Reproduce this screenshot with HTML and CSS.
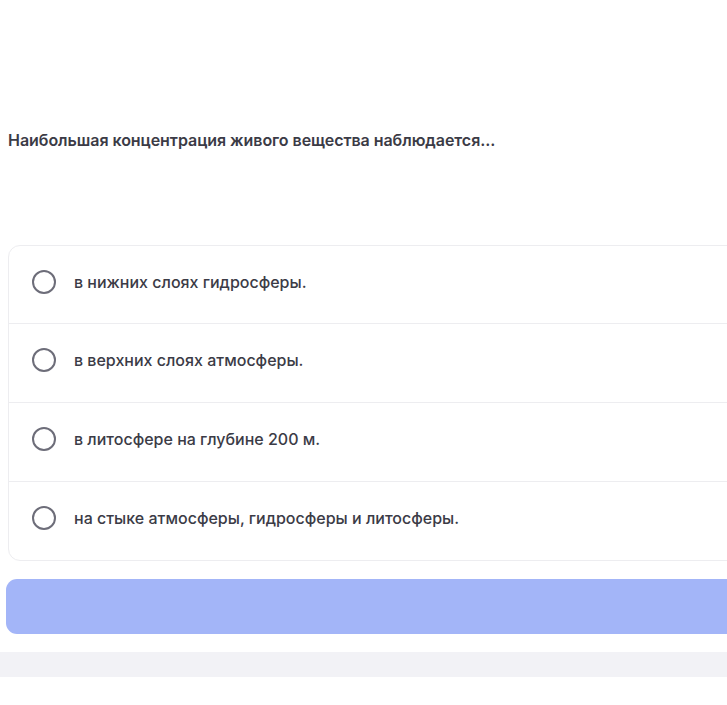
FILE: index.html
```html
<!DOCTYPE html>
<html lang="ru">
<head>
<meta charset="utf-8">
<link rel="stylesheet" href="styles.css">
</head>
<body>
<div class="page">
  <div class="question">Наибольшая концентрация живого вещества наблюдается...</div>
  <div class="options">
    <div class="option"><span class="radio"></span><span class="label">в нижних слоях гидросферы.</span></div>
    <div class="option"><span class="radio"></span><span class="label">в верхних слоях атмосферы.</span></div>
    <div class="option"><span class="radio"></span><span class="label">в литосфере на глубине 200 м.</span></div>
    <div class="option"><span class="radio"></span><span class="label">на стыке атмосферы, гидросферы и литосферы.</span></div>
  </div>
  <div class="submit"></div>
</div>
<div class="band"></div>
</body>
</html>
```
FILE: styles.css
```css
html, body {
  margin: 0;
  padding: 0;
  background: #ffffff;
  overflow: hidden;
  font-family: Inter, "Noto Sans", sans-serif;
}
.page {
  width: 780px;
  padding: 131px 0 0 8px;
}
.question {
  font-size: 16px;
  font-weight: 600;
  color: #3b3b46;
  line-height: 18px;
  letter-spacing: -0.05px;
}
.options {
  margin-top: 96px;
  border: 1px solid #ededf0;
  border-radius: 12px;
  background: #fff;
}
.option {
  display: flex;
  align-items: center;
  height: 77px;
  box-sizing: border-box;
  padding: 0 0 6px 23px;
  border-top: 1px solid #ededf0;
}
.option + .option {
  height: 79px;
}
.option:first-child {
  border-top: none;
}
.radio {
  width: 20px;
  height: 20px;
  border: 2.5px solid #6d6d79;
  border-radius: 50%;
  flex: none;
}
.label {
  margin-left: 18px;
  font-size: 16px;
  font-weight: 500;
  color: #3b3b46;
}
.submit {
  margin: 18px 0 0 -2px;
  height: 55px;
  border-radius: 11px;
  background: #a3b5f8;
}
.band {
  margin-top: 18px;
  height: 25px;
  background: #f2f2f6;
}
```
